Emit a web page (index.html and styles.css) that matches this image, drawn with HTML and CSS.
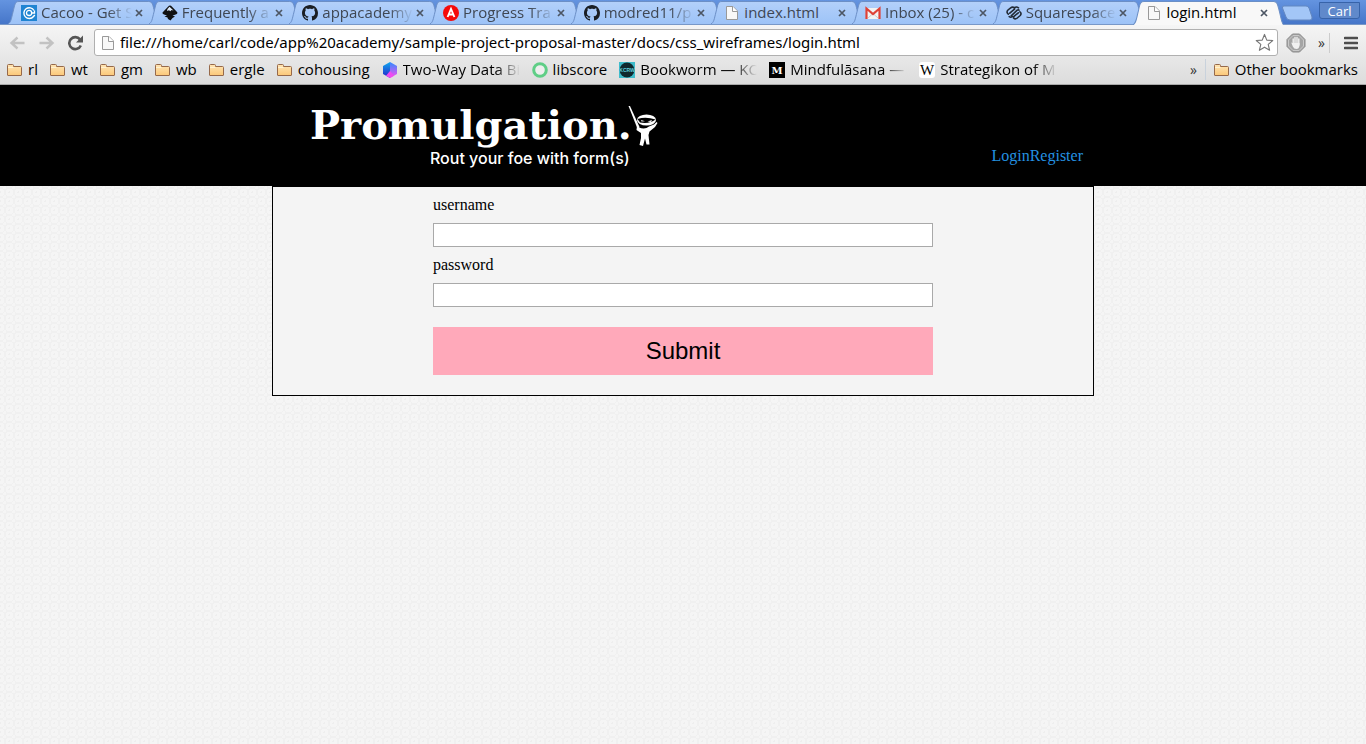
FILE: index.html
```html
<!DOCTYPE html>
<html lang="en">
<head>
<meta charset="utf-8">
<title>login.html</title>
<link rel="stylesheet" href="styles.css">
</head>
<body>
<svg class="defs" width="0" height="0" aria-hidden="true">
  <defs>
    <linearGradient id="tabFill" x1="0" y1="0" x2="0" y2="1"><stop offset="0" stop-color="#b3d0fa"/><stop offset="1" stop-color="#9dc3f7"/></linearGradient>
    <linearGradient id="folderFill" x1="0" y1="0" x2="0" y2="1"><stop offset="0" stop-color="#ffe5b4"/><stop offset="1" stop-color="#fbc878"/></linearGradient>
    <linearGradient id="hexLeft" x1="0" y1="0" x2="0" y2="1"><stop offset="0" stop-color="#12a8ee"/><stop offset="1" stop-color="#2320c8"/></linearGradient>
    <linearGradient id="hexRight" x1="0" y1="0" x2="0" y2="1"><stop offset="0" stop-color="#2f8cff"/><stop offset="1" stop-color="#ff4df0"/></linearGradient>
    <symbol id="shape" viewBox="0 0 151 24" preserveAspectRatio="none"><path d="M0 24C3 22 3 20 5 12C7 4 7 1.500 11 1.500H141C145 1.500 145 5 147 12C149 20 149 22 151 24"/></symbol>
    <symbol id="folder" viewBox="0 0 16 16"><path d="M.5 13V3.500Q.5 2.500 1.500 2.500H5.500Q6.500 2.500 6.500 3.500V4.500H13.500Q14.500 4.500 14.500 5.500V13Q14.500 13.500 14 13.500H1Q.5 13.500 .5 13Z" fill="url(#folderFill)" stroke="#96694a"/><path d="M1 5.500H6.500" stroke="#fff1d0"/></symbol>
    <symbol id="page" viewBox="0 0 16 16"><path d="M2.500 1.500H9L13.500 6V14.500H2.500Z" fill="#f8f8f8" stroke="#999"/><path d="M8.500 1.500V6.500H13.500" fill="#fff" stroke="#999"/></symbol>
    <symbol id="close" viewBox="0 0 10 10"><path d="M2 2L8 8M8 2L2 8" stroke="#4c5664" stroke-width="1.700"/></symbol>
    <symbol id="github" viewBox="0 0 16 16"><path fill="#1b1f24" d="M8 0C3.580 0 0 3.580 0 8c0 3.540 2.290 6.530 5.470 7.590.4.070.55-.17.55-.38 0-.19-.01-.82-.01-1.490-2.010.37-2.530-.49-2.690-.94-.09-.23-.48-.94-.82-1.130-.28-.15-.68-.52-.01-.53.63-.01 1.080.58 1.230.82.72 1.210 1.870.87 2.330.66.07-.52.28-.87.51-1.070-1.780-.2-3.640-.89-3.640-3.950 0-.87.31-1.590.82-2.150-.08-.2-.36-1.020.08-2.120 0 0 .67-.21 2.200.82.64-.18 1.320-.27 2-.27s1.360.09 2 .27c1.530-1.040 2.200-.82 2.200-.82.44 1.100.16 1.920.08 2.120.51.56.82 1.270.82 2.150 0 3.070-1.870 3.750-3.650 3.950.29.25.54.73.54 1.480 0 1.070-.01 1.930-.01 2.200 0 .21.15.46.55.38A8.010 8.010 0 0 0 16 8c0-4.420-3.580-8-8-8z"/></symbol>
  </defs>
</svg>

<div class="browser">
  <div class="tabstrip">
    <nav class="tabs" aria-label="Tabs">
      <div class="tab"><svg class="tab-shape"><use href="#shape"/></svg>
        <svg class="icon" viewBox="0 0 16 16"><rect width="16" height="16" fill="#1f84d2"/><path d="M13 5.500A5.400 5.400 0 1 0 12.500 11.500L13.800 10" fill="none" stroke="#fff" stroke-width="1.400"/><path d="M5.500 8A2.600 2.600 0 0 1 10.700 8Q10.700 10.500 8.200 10.500Q5.500 10.500 5.500 8M10.500 8H13.500V5.500" fill="none" stroke="#fff" stroke-width="1.300"/></svg>
        <span class="tab-title fade">Cacoo - Get S</span><button class="close" aria-label="Close"><svg><use href="#close"/></svg></button></div>
      <div class="tab"><svg class="tab-shape"><use href="#shape"/></svg>
        <svg class="icon" viewBox="0 0 16 16"><path d="M8 .5Q9 .5 10 1.700L15 7Q16.500 9 13 9.700L10.500 10.500L13 11.500L10.500 13L8.500 15.500L6 14L5.500 12.500L2.500 11.500L5 10.500L2 9.500Q-.5 8.500 1 7L6 1.700Q7 .5 8 .5Z" fill="#111"/><path d="M7.500 1.800L11.500 5.500L9.500 5L8.300 6.200L7 5.200L5 6L5.500 4Z" fill="#dce8f8"/></svg>
        <span class="tab-title fade">Frequently a</span><button class="close" aria-label="Close"><svg><use href="#close"/></svg></button></div>
      <div class="tab"><svg class="tab-shape"><use href="#shape"/></svg>
        <svg class="icon"><use href="#github"/></svg>
        <span class="tab-title fade">appacademy</span><button class="close" aria-label="Close"><svg><use href="#close"/></svg></button></div>
      <div class="tab"><svg class="tab-shape"><use href="#shape"/></svg>
        <svg class="icon" viewBox="0 0 16 16"><circle cx="8" cy="8" r="8" fill="#f50a0a"/><path d="M4.600 12L8 4L11.400 12M6 9.500H10" fill="none" stroke="#fff" stroke-width="1.900"/></svg>
        <span class="tab-title fade">Progress Tra</span><button class="close" aria-label="Close"><svg><use href="#close"/></svg></button></div>
      <div class="tab"><svg class="tab-shape"><use href="#shape"/></svg>
        <svg class="icon"><use href="#github"/></svg>
        <span class="tab-title fade">modred11/p</span><button class="close" aria-label="Close"><svg><use href="#close"/></svg></button></div>
      <div class="tab"><svg class="tab-shape"><use href="#shape"/></svg>
        <svg class="icon"><use href="#page"/></svg>
        <span class="tab-title">index.html</span><button class="close" aria-label="Close"><svg><use href="#close"/></svg></button></div>
      <div class="tab"><svg class="tab-shape"><use href="#shape"/></svg>
        <svg class="icon" viewBox="0 0 16 16"><path d="M1 3H15V14H1Z" fill="#f2f2f2"/><path d="M3 13L8 8.500L13 13" fill="none" stroke="#c8c8c8"/><path d="M1.500 14V3.500L8 9L14.500 3.500V14" fill="none" stroke="#df4136" stroke-width="2.200"/></svg>
        <span class="tab-title fade">Inbox (25) - c</span><button class="close" aria-label="Close"><svg><use href="#close"/></svg></button></div>
      <div class="tab"><svg class="tab-shape"><use href="#shape"/></svg>
        <svg class="icon" viewBox="0 0 16 16"><g fill="none" stroke="#222b36" stroke-width="1.600" stroke-linecap="round"><path d="M2.300 9.200Q-.1 7.200 2 5L4.700 2.800Q6.700 1.300 8.600 3.200"/><path d="M3.800 8.200L8.500 4.200M5.200 10.800L11.200 5.200Q12.500 4.200 13 5.200"/><path d="M3.200 11.600Q4.700 12.800 6.300 11.600"/><path d="M7.500 12.900Q9.300 14.700 11.300 13L14.200 10.500Q16 8.500 13.900 6.800"/><path d="M7.700 11.700L12.300 7.800"/><path d="M8.700 2.500Q10.500 1.300 12.500 2.800"/></g></svg>
        <span class="tab-title fade">Squarespace</span><button class="close" aria-label="Close"><svg><use href="#close"/></svg></button></div>
      <div class="tab tab-active"><svg class="tab-shape"><use href="#shape"/></svg>
        <svg class="icon"><use href="#page"/></svg>
        <span class="tab-title">login.html</span><button class="close" aria-label="Close"><svg><use href="#close"/></svg></button></div>
    </nav>
    <div class="window-controls">
      <button class="new-tab" aria-label="New tab"><svg viewBox="0 0 32 16"><path d="M3 1H25Q27 1 28 3L31 12Q31.500 15 29 15H9Q6 15 5 12L1.500 3Q1 1 3 1Z" fill="#a3c6f7" stroke="#6387c0"/></svg></button>
      <button class="profile">Carl</button>
    </div>
  </div>

  <div class="toolbar">
    <button class="tool" aria-label="Back"><svg viewBox="0 0 16 14"><path d="M8 1.500L2 7L8 12.500M2 7H15" fill="none" stroke="#c2c2c2" stroke-width="2.400"/></svg></button>
    <button class="tool" aria-label="Forward"><svg viewBox="0 0 16 14"><path d="M8 1.500L14 7L8 12.500M14 7H1" fill="none" stroke="#c2c2c2" stroke-width="2.400"/></svg></button>
    <button class="tool reload" aria-label="Reload"><svg viewBox="0 0 16 16"><path d="M12.500 4.400A6 6 0 1 0 13.300 10.500" fill="none" stroke="#555" stroke-width="2.600"/><path d="M15.500 .5V7.500H8.500Z" fill="#555"/></svg></button>
    <div class="omnibox">
      <svg class="icon"><use href="#page"/></svg>
      <input class="url" type="text" aria-label="Address" value="file:///home/carl/code/app%20academy/sample-project-proposal-master/docs/css_wireframes/login.html">
      <button class="star" aria-label="Bookmark"><svg viewBox="0 0 20 20"><path d="M10 1.500L12.400 7.500L18.700 7.900L13.900 12L15.400 18.200L10 14.900L4.600 18.200L6.100 12L1.300 7.900L7.600 7.500Z" fill="#fff" stroke="#777" stroke-width="1.200" stroke-linejoin="round"/></svg></button>
    </div>
    <button class="hand" aria-label="Ad blocker"><svg viewBox="0 0 20 20"><path d="M6.500 1H13.500L19 6.500V13.500L13.500 19H6.500L1 13.500V6.500Z" fill="#a4a4a4" stroke="#8b8b8b"/><path d="M7 2.500H13L17.500 7V13L13 17.500H7L2.500 13V7Z" fill="none" stroke="#c8c8c8"/><path d="M7.200 6V11M9 4.500V10M11 4.500V10M12.800 6V12" stroke="#f1f1f1" stroke-width="1.400" stroke-linecap="round"/><path d="M5.200 9.500L6.500 10H13.500V12.500Q13 16 10.500 16Q8 16 6.800 13.500Z" fill="#f1f1f1"/></svg></button>
    <button class="more" aria-label="More extensions">»</button>
    <button class="menu" aria-label="Menu"><svg viewBox="0 0 14 14"><path d="M1 2H13M1 7H13M1 12H13" stroke="#4e4e4e" stroke-width="2.600" stroke-linecap="round"/></svg></button>
  </div>

  <nav class="bookmarks" aria-label="Bookmarks">
    <a class="bookmark" href="#"><svg class="icon"><use href="#folder"/></svg><span>rl</span></a>
    <a class="bookmark" href="#"><svg class="icon"><use href="#folder"/></svg><span>wt</span></a>
    <a class="bookmark" href="#"><svg class="icon"><use href="#folder"/></svg><span>gm</span></a>
    <a class="bookmark" href="#"><svg class="icon"><use href="#folder"/></svg><span>wb</span></a>
    <a class="bookmark" href="#"><svg class="icon"><use href="#folder"/></svg><span>ergle</span></a>
    <a class="bookmark" href="#"><svg class="icon"><use href="#folder"/></svg><span>cohousing</span></a>
    <a class="bookmark" href="#"><svg class="icon" viewBox="0 0 16 16"><path d="M8 0L15 4V12L8 16Z" fill="url(#hexRight)"/><path d="M8 0L1 4V12L8 16Z" fill="url(#hexLeft)"/><path d="M8 16L4 13.700L8 9L12 13.700Z" fill="#f04cf0"/></svg><span class="cut fade">Two-Way Data Bi</span></a>
    <a class="bookmark" href="#"><svg class="icon" viewBox="0 0 16 16"><circle cx="8" cy="8" r="6.300" fill="#eee" stroke="#5fce86" stroke-width="3"/></svg><span>libscore</span></a>
    <a class="bookmark" href="#"><svg class="icon" viewBox="0 0 16 16"><rect width="16" height="16" fill="#3fbccb"/><circle cx="8" cy="8" r="7.400" fill="#10282d"/><text x="8" y="10" class="badge-text">KCRW</text></svg><span class="cut fade">Bookworm — KC</span></a>
    <a class="bookmark" href="#"><svg class="icon" viewBox="0 0 16 16"><rect width="16" height="16"/><text x="8" y="12" class="m-text">M</text></svg><span class="cut fade">Mindfulāsana — |</span></a>
    <a class="bookmark" href="#"><svg class="icon" viewBox="0 0 16 16"><rect width="16" height="16" rx="3" fill="#fff"/><text x="8" y="13" class="w-text">W</text></svg><span class="cut fade">Strategikon of M</span></a>
    <div class="bookmarks-end">
      <button class="more" aria-label="More bookmarks">»</button>
      <a class="bookmark" href="#"><svg class="icon"><use href="#folder"/></svg><span>Other bookmarks</span></a>
    </div>
  </nav>
</div>

<header class="header">
  <div class="header-inner">
    <div class="logo">
      <h1 class="brand">Promulgation.<svg class="ninja" viewBox="0 0 30 42" aria-hidden="true"><path d="M.5 1L2 1L11.500 22L10 25Z" fill="#fff"/><ellipse cx="18.500" cy="15" rx="9.500" ry="5.500" fill="#fff"/><path d="M9.500 14Q18 11.500 27.500 14.500Q22 19 12 17.500Z" fill="#000"/><path d="M13 15L17 16.200L13.500 16.500ZM19.500 16.500L24 15L23 17Z" fill="#fff"/><path d="M9 21L11 22.500Q17 25 21 21.500L26 19.500L28.500 17L29.500 18L27 22L21.500 26.500L20.500 30L21.500 39.500H18.500L17 33.500L15 41L11.500 40L13 33V28L8.500 25Z" fill="#fff"/></svg></h1>
      <p class="tagline">Rout your foe with form(s)</p>
    </div>
    <nav class="links"><a href="#">Login</a><a href="#">Register</a></nav>
  </div>
</header>

<main class="panel">
  <form class="form">
    <label for="username">username</label>
    <input id="username" type="text">
    <label for="password">password</label>
    <input id="password" type="password">
    <button class="submit" type="button">Submit</button>
  </form>
</main>
</body>
</html>
```
FILE: styles.css
```css
* { box-sizing: border-box; }

body {
  margin: 0;
  min-height: 100vh;
  font: 16px/18px "Liberation Serif", serif;
  color: #000;
  background-color: #f5f5f5;
  background-image: radial-gradient(circle, #eee 0 1px, transparent 1px 4px, #f0f0f0 4px 5px, transparent 5px);
  background-size: 9px 9px;
  background-position: 5px 8px;
}

button { padding: 0; border: 0; background: none; font: inherit; color: inherit; }
svg { display: block; flex: none; }
.defs { position: absolute; }
.icon { width: 16px; height: 16px; }
.fade { mask-image: linear-gradient(to left, transparent, #000 24px); }

/* Browser chrome */
.browser {
  font: 15px/20px "Open Sans", "Noto Sans", sans-serif;
  background: linear-gradient(#f5f5f5 25px, #dcdcdc);
  border-bottom: 1px solid #a9a9a9;
}
.tabstrip {
  display: flex;
  height: 25px;
  padding-left: 8px;
  background: linear-gradient(#6494e0, #4676c9);
  border-bottom: 1px solid #7898c8;
}
.tabs { display: flex; flex: 1; min-width: 0; }
.tab {
  position: relative;
  display: flex;
  flex: 1;
  min-width: 0;
  align-items: center;
  height: 25px;
  padding: 1px 5px 0 13px;
  color: #3f4753;
}
.tab-shape {
  position: absolute;
  left: 0;
  top: 0;
  width: calc(100% + 10px);
  height: 24px;
  fill: url(#tabFill);
  stroke: #6b8fc6;
}
.tab .icon { position: relative; }
.tab-title {
  position: relative;
  flex: 1;
  min-width: 0;
  margin-left: 4px;
  padding-bottom: 2px;
  overflow: hidden;
  white-space: nowrap;
}
.close { position: relative; width: 10px; height: 10px; margin-left: 2px; }
.close svg { width: 10px; height: 10px; }
.tab-active { z-index: 1; color: #000; }
.tab-active .tab-shape { height: 25px; fill: #f8f8f8; }
.window-controls { display: flex; width: 92px; align-items: flex-start; justify-content: space-between; padding: 2px 6px 0 7px; }
.new-tab { margin-top: 3px; }
.new-tab svg { width: 32px; height: 16px; }
.profile {
  width: 41px;
  height: 17px;
  border: 1px solid #3763a9;
  border-radius: 0 0 3px 3px;
  background: #6089cb;
  font-size: 13px;
  line-height: 16px;
  color: #fff;
}

.toolbar { display: flex; height: 32px; align-items: center; padding: 3px 8px 0 9px; }
.tool { margin-right: 12px; }
.tool svg { width: 17px; height: 14px; }
.reload { margin-right: 10px; }
.reload svg { width: 17px; height: 16px; }
.omnibox {
  display: flex;
  flex: 1;
  min-width: 0;
  height: 27px;
  align-items: center;
  padding: 0 3px 0 5px;
  border: 1px solid #b0b0b0;
  border-radius: 3px;
  background: #fff;
}
.url { flex: 1; min-width: 0; height: 24px; padding: 0 0 1px; margin-left: 4px; border: 0; outline: 0; background: none; font: 15px/23px "Noto Sans", sans-serif; color: #000; }
.star svg { width: 19px; height: 19px; }
.hand { margin-left: 8px; }
.hand svg { width: 20px; height: 20px; }
.more { font-size: 14px; color: #333; }
.toolbar .more { margin-left: 12px; padding-right: 4px; border-right: 1px solid #ccc; }
.menu { margin-left: 14px; }
.menu svg { width: 14px; height: 14px; }

.bookmarks { display: flex; height: 27px; align-items: center; gap: 12px; padding: 0 8px 2px 7px; white-space: nowrap; }
.bookmark { display: flex; align-items: center; gap: 5px; color: #000; text-decoration: none; }
.bookmark span { padding-bottom: 1px; }
.cut { width: 117px; overflow: hidden; }
.bookmarks-end { display: flex; margin-left: auto; align-items: center; }
.bookmarks-end .bookmark { margin-left: 8px; padding-left: 8px; border-left: 1px solid #c9d2dc; }
.badge-text { font: bold 5px "Liberation Sans", sans-serif; fill: #5fd0dc; text-anchor: middle; }
.m-text { font: bold 10px "DejaVu Serif", serif; fill: #fff; text-anchor: middle; }
.w-text { font: 15px "Liberation Serif", serif; fill: #000; text-anchor: middle; }

/* Site header */
.header { background: #000; color: #fff; }
.header-inner {
  display: flex;
  justify-content: space-between;
  align-items: flex-end;
  max-width: 822px;
  min-height: 101px;
  margin: 0 auto;
  padding: 20px 11px 18px 38px;
}
.brand {
  display: flex;
  height: 43px;
  margin: 0;
  font: bold 40px/40px "DejaVu Serif", serif;
}
.ninja { width: 30px; height: 42px; margin-left: -4px; }
.tagline { margin: 0 28px 0 0; font: 500 16px/20px Inter, sans-serif; text-align: right; }
.links { display: flex; padding-bottom: 3px; }
.links a { color: #2491e0; text-decoration: none; }

/* Login form */
.panel {
  max-width: 822px;
  margin: 0 auto;
  padding: 0 20px 20px;
  border: 1px solid #000;
  background: #f4f4f4;
}
.form { display: flex; flex-direction: column; max-width: 500px; margin: 0 auto; }
.form label { line-height: 36px; }
.form input { height: 24px; padding: 0 4px; border: 1px solid #a9a9a9; background: #fff; font: inherit; }
.submit { height: 48px; margin-top: 20px; background: #ffa9ba; font: 24px/48px "Liberation Sans", sans-serif; }
```
